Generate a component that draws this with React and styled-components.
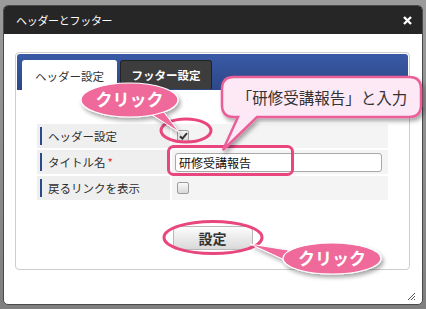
import styled, { createGlobalStyle } from "styled-components";

const Global = createGlobalStyle`
  html, body { margin: 0; padding: 0; }
  body { font-family: "Noto Sans CJK JP", "Liberation Sans", sans-serif; }
  * { box-sizing: border-box; }
`;

const Page = styled.div`
  position: relative;
  width: 426px;
  height: 309px;
  padding: 5px 3px 4px;
  background: linear-gradient(#9b9b9b, #7f7f7f);
`;

const Dialog = styled.div`
  position: relative;
  width: 420px;
  height: 300px;
  display: flex;
  flex-direction: column;
  background: #fff;
  border: 1px solid #4a4a4a;
  border-radius: 5px;
  overflow: hidden;
`;

const TitleBar = styled.div`
  height: 28px;
  flex: none;
  display: flex;
  align-items: center;
  justify-content: space-between;
  padding: 0 10px 0 12px;
  background: #262626;
  color: #fff;
  font-size: 11px;
  letter-spacing: -0.3px;
`;

const Body = styled.div`
  flex: 1;
  padding: 18px 12px 0 11px;
`;

const Panel = styled.div`
  height: 218px;
  padding: 1px;
  border: 1px solid #cdcdcd;
  border-radius: 4px;
`;

const TabBar = styled.div`
  height: 36px;
  display: flex;
  align-items: flex-end;
  gap: 3px;
  padding: 6px 0 0 5px;
  background: linear-gradient(#3a5aa6, #2d4889);
  border-radius: 3px 3px 0 0;
`;

const Tab = styled.div`
  width: ${(p) => (p.$active ? 95 : 92)}px;
  height: ${(p) => (p.$active ? 30 : 29)}px;
  margin-bottom: ${(p) => (p.$active ? 0 : 1)}px;
  display: flex;
  align-items: center;
  justify-content: center;
  font-size: 11.5px;
  border-radius: 3px 3px 0 0;
  background: ${(p) => (p.$active ? "#fff" : "#3d3d3d")};
  color: ${(p) => (p.$active ? "#333" : "#fff")};
  font-weight: ${(p) => (p.$active ? 400 : 700)};
  border: 1px solid ${(p) => (p.$active ? "#fff" : "#222")};
  border-bottom: none;
`;

const Content = styled.div`
  padding: 34px 0 0 20px;
`;

const Table = styled.div`
  display: grid;
  grid-template-columns: 133px 216px;
  grid-auto-rows: 24px;
  gap: 2px;
`;

const LabelCell = styled.div`
  display: flex;
  align-items: center;
  padding-left: 3px;
  background: #efefef;
`;

const Bar = styled.div`
  height: 18px;
  display: flex;
  align-items: center;
  padding-left: 6px;
  border-left: 2px solid #2c4a8b;
  color: #2e2e2e;
  font-size: 11.5px;
`;

const Req = styled.span`
  color: #e2302f;
  margin-left: 2px;
`;

const ValueCell = styled.div`
  display: flex;
  align-items: center;
  padding-left: 5px;
  background: #f4f4f4;
`;

const Check = styled.span`
  width: 12px;
  height: 12px;
  display: flex;
  align-items: center;
  justify-content: center;
  border: 1px solid #9d9d9d;
  border-radius: 2px;
  background: linear-gradient(#fafafa, #d8d8d8);
`;

const TextInput = styled.div`
  width: 207px;
  height: 19px;
  margin-left: -2px;
  display: flex;
  align-items: center;
  padding-left: 3px;
  background: #fff;
  border: 1px solid #a9a9a9;
  border-radius: 3px;
  font-size: 12px;
  color: #111;
`;

const ButtonRow = styled.div`
  display: flex;
  justify-content: center;
  margin-top: 26px;
  padding-right: 20px;
`;

const Button = styled.div`
  width: 80px;
  height: 24px;
  display: flex;
  align-items: center;
  justify-content: center;
  border: 1px solid #b8b8b8;
  border-radius: 4px;
  background: linear-gradient(#fdfdfd, #d9d9d9);
  color: #333;
  font-size: 14px;
  font-weight: 700;
`;

const Grip = styled.svg`
  position: absolute;
  right: 6px;
  bottom: 3px;
`;

const Overlay = styled.svg`
  position: absolute;
  inset: 0;
  pointer-events: none;
`;

const Note = styled.div`
  position: absolute;
  left: ${(p) => p.$x}px;
  top: ${(p) => p.$y}px;
  width: ${(p) => p.$w}px;
  text-align: center;
  line-height: 20px;
  font-size: ${(p) => (p.$callout ? 15.5 : 17)}px;
  font-weight: ${(p) => (p.$callout ? 400 : 700)};
  color: ${(p) => (p.$callout ? "#333" : "#fff")};
  white-space: nowrap;
`;

const PINK = "#e9467f";

const CheckMark = () => (
  <svg width="9" height="8" viewBox="0 0 9 8">
    <path d="M1 4.2 L3.4 6.6 L8 1.2" fill="none" stroke="#333" strokeWidth="2" />
  </svg>
);

const Row = ({ label, req, children }) => (
  <>
    <LabelCell>
      <Bar>
        {label}
        {req && <Req>*</Req>}
      </Bar>
    </LabelCell>
    <ValueCell>{children}</ValueCell>
  </>
);

const Annotations = () => (
  <>
    <Overlay width="426" height="309" viewBox="0 0 426 309">
      <defs>
        <filter id="sh" x="-20%" y="-20%" width="140%" height="160%">
          <feDropShadow dx="2" dy="3" stdDeviation="2" floodColor="#000" floodOpacity="0.35" />
        </filter>
      </defs>
      <ellipse cx="186" cy="130.5" rx="25" ry="11.5" fill="none" stroke={PINK} strokeWidth="3" />
      <rect x="168.5" y="146.5" width="124" height="28" rx="5" fill="none" stroke={PINK} strokeWidth="3" />
      <ellipse cx="213" cy="237.5" rx="49" ry="16" fill="none" stroke={PINK} strokeWidth="3" />

      <g filter="url(#sh)">
        <polygon points="146,111 160,107 179,132" fill="#ef6a9b" stroke="#fff" strokeWidth="1" />
        <ellipse cx="129.5" cy="100" rx="48.5" ry="17" fill="#ef6a9b" stroke="#fff" strokeWidth="1.2" />
      </g>

      <path
        d="M234 77 H409 Q421 77 421 89 V105 Q421 117 409 117 H257 L223 150 L238 117 H234 Q222 117 222 105 V89 Q222 77 234 77 Z"
        fill="#fde9f6"
        stroke="#ea5f98"
        strokeWidth="2.5"
        filter="url(#sh)"
      />

      <g filter="url(#sh)">
        <polygon points="250,244 294,251 289,262" fill="#ef6a9b" stroke="#fff" strokeWidth="1" />
        <ellipse cx="332" cy="258.5" rx="49" ry="15.5" fill="#ef6a9b" stroke="#fff" strokeWidth="1.2" />
      </g>
    </Overlay>
    <Note $x={81} $y={89} $w={97}>クリック</Note>
    <Note $callout $x={222} $y={87} $w={200}>「研修受講報告」と入力</Note>
    <Note $x={283} $y={248} $w={98}>クリック</Note>
  </>
);

export default function App() {
  return (
    <Page>
      <Global />
      <Dialog>
        <TitleBar>
          <span>ヘッダーとフッター</span>
          <svg width="9" height="9" viewBox="0 0 9 9">
            <path d="M1 1 L8 8 M8 1 L1 8" stroke="#fff" strokeWidth="2.4" />
          </svg>
        </TitleBar>
        <Body>
          <Panel>
            <TabBar>
              <Tab $active>ヘッダー設定</Tab>
              <Tab>フッター設定</Tab>
            </TabBar>
            <Content>
              <Table>
                <Row label="ヘッダー設定">
                  <Check>
                    <CheckMark />
                  </Check>
                </Row>
                <Row label="タイトル名" req>
                  <TextInput>研修受講報告</TextInput>
                </Row>
                <Row label="戻るリンクを表示">
                  <Check />
                </Row>
              </Table>
              <ButtonRow>
                <Button>設定</Button>
              </ButtonRow>
            </Content>
          </Panel>
        </Body>
        <Grip width="9" height="9" viewBox="0 0 9 9">
          <path d="M1 8 L8 1 M4 8 L8 4 M7 8 L8 7" stroke="#555" strokeWidth="1" />
        </Grip>
      </Dialog>
      <Annotations />
    </Page>
  );
}
